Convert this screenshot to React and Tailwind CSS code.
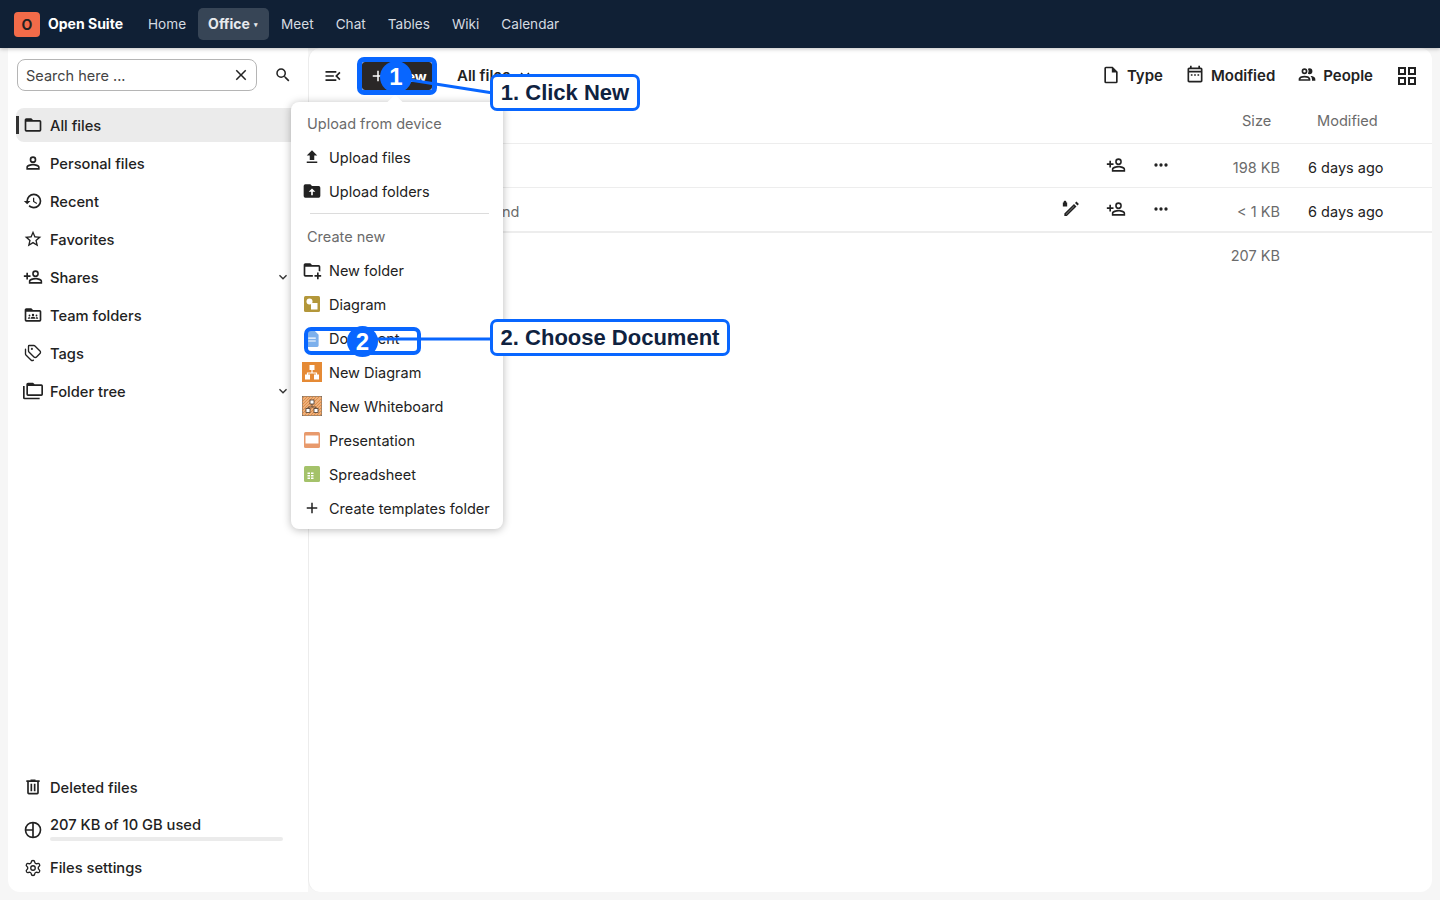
import React from 'react'
import { Settings, Tags } from 'lucide-react'

const P = {
  folder: 'M20,18H4V8H20M20,6H12L10,4H4C2.89,4 2,4.89 2,6V18A2,2 0 0,0 4,20H20A2,2 0 0,0 22,18V8C22,6.89 21.1,6 20,6Z',
  account: 'M12,4A4,4 0 0,1 16,8A4,4 0 0,1 12,12A4,4 0 0,1 8,8A4,4 0 0,1 12,4M12,6A2,2 0 0,0 10,8A2,2 0 0,0 12,10A2,2 0 0,0 14,8A2,2 0 0,0 12,6M12,13C14.67,13 20,14.33 20,17V20H4V17C4,14.33 9.33,13 12,13M12,14.9C9.03,14.9 5.9,16.36 5.9,17V18.1H18.1V17C18.1,16.36 14.97,14.9 12,14.9Z',
  history: 'M13.5,8H12V13L16.28,15.54L17,14.33L13.5,12.25V8M13,3A9,9 0 0,0 4,12H1L4.96,16.03L9,12H6A7,7 0 0,1 13,5A7,7 0 0,1 20,12A7,7 0 0,1 13,19C11.07,19 9.32,18.21 8.06,16.94L6.64,18.36C8.27,20 10.5,21 13,21A9,9 0 0,0 22,12A9,9 0 0,0 13,3',
  star: 'M12,15.39L8.24,17.66L9.23,13.38L5.91,10.5L10.29,10.13L12,6.09L13.71,10.13L18.09,10.5L14.77,13.38L15.76,17.66M22,9.24L14.81,8.63L12,2L9.19,8.63L2,9.24L7.45,13.97L5.82,21L12,17.27L18.18,21L16.54,13.97L22,9.24Z',
  share: 'M15,4A4,4 0 0,0 11,8A4,4 0 0,0 15,12A4,4 0 0,0 19,8A4,4 0 0,0 15,4M15,5.9C16.16,5.9 17.1,6.84 17.1,8C17.1,9.16 16.16,10.1 15,10.1A2.1,2.1 0 0,1 12.9,8A2.1,2.1 0 0,1 15,5.9M4,7V10H1V12H4V15H6V12H9V10H6V7H4M15,13C12.33,13 7,14.33 7,17V20H23V17C23,14.33 17.67,13 15,13M15,14.9C17.97,14.9 21.1,16.36 21.1,17V18.1H8.9V17C8.9,16.36 12,14.9 15,14.9Z',
  team: 'M20,18H4V8H20M20,6H12L10,4H4C2.89,4 2,4.89 2,6V18A2,2 0 0,0 4,20H20A2,2 0 0,0 22,18V8C22,6.89 21.1,6 20,6ZM12,10.5A1.4,1.4 0 1,1 12,13.3A1.4,1.4 0 1,1 12,10.5ZM7.8,11.5A1.1,1.1 0 1,1 7.8,13.7A1.1,1.1 0 1,1 7.8,11.5ZM16.2,11.5A1.1,1.1 0 1,1 16.2,13.7A1.1,1.1 0 1,1 16.2,11.5ZM9,16.5C9,15 10.5,14.2 12,14.2C13.5,14.2 15,15 15,16.5ZM5.8,16.5C5.8,15.3 6.8,14.5 8,14.5L8.4,16.5ZM18.2,16.5C18.2,15.3 17.2,14.5 16,14.5L15.6,16.5Z',
  tree: 'M22,4A2,2 0 0,1 24,6V16A2,2 0 0,1 22,18H6A2,2 0 0,1 4,16V4A2,2 0 0,1 6,2H12L14,4H22M2,6V20H20V22H2A2,2 0 0,1 0,20V6H2M6,6V16H22V6H6Z',
  trash: 'M9,3V4H4V6H5V19A2,2 0 0,0 7,21H17A2,2 0 0,0 19,19V6H20V4H15V3H9M7,6H17V19H7V6M9,8V17H11V8H9M13,8V17H15V8H13Z',
  pie: 'M12,2A10,10 0 1,0 22,12A10,10 0 0,0 12,2M11,4.06V11H4.06A8,8 0 0,1 11,4.06M4.06,13H11V19.94A8,8 0 0,1 4.06,13M13,19.94V4.06A8,8 0 0,1 13,19.94Z',
  search: 'M9.5,3A6.5,6.5 0 0,1 16,9.5C16,11.11 15.41,12.59 14.44,13.73L14.71,14H15.5L20.5,19L19,20.5L14,15.5V14.71L13.73,14.44C12.59,15.41 11.11,16 9.5,16A6.5,6.5 0 0,1 3,9.5A6.5,6.5 0 0,1 9.5,3M9.5,5C7,5 5,7 5,9.5C5,12 7,14 9.5,14C12,14 14,12 14,9.5C14,7 12,5 9.5,5Z',
  close: 'M19,6.41L17.59,5L12,10.59L6.41,5L5,6.41L10.59,12L5,17.59L6.41,19L12,13.41L17.59,19L19,17.59L13.41,12L19,6.41Z',
  menuOpen: 'M21,15.61L19.59,17L14.58,12L19.59,7L21,8.39L17.44,12L21,15.61M3,6H16V8H3V6M3,13V11H13V13H3M3,18V16H16V18H3Z',
  file: 'M14,2H6A2,2 0 0,0 4,4V20A2,2 0 0,0 6,22H18A2,2 0 0,0 20,20V8L14,2M18,20H6V4H13V9H18V20Z',
  calendar: 'M7 11H9V13H7V11M21 5V19C21 20.11 20.11 21 19 21H5C3.89 21 3 20.1 3 19V5C3 3.9 3.9 3 5 3H6V1H8V3H16V1H18V3H19C20.11 3 21 3.9 21 5M5 7H19V5H5V7M19 19V9H5V19H19M17 13V11H15V13H17M13 13V11H11V13H13Z',
  people: 'M13.07 10.41A5 5 0 0 0 13.07 4.59A3.39 3.39 0 0 1 15 4A3.5 3.5 0 0 1 15 11A3.39 3.39 0 0 1 13.07 10.41M5.5 7.5A3.5 3.5 0 1 1 9 11A3.5 3.5 0 0 1 5.5 7.5M7.5 7.5A1.5 1.5 0 1 0 9 6A1.5 1.5 0 0 0 7.5 7.5M16 17V19H2V17S2 13 9 13 16 17 16 17M14 17C13.86 16.22 12.67 15 9 15S4.07 16.3 4 17M15.95 13A5.32 5.32 0 0 1 18 17V19H22V17S22 13.37 15.94 13Z',
  grid: 'M3 11H11V3H3M5 5H9V9H5M13 21H21V13H13M15 15H19V19H15M3 21H11V13H3M5 15H9V19H5M13 3V11H21V3M19 9H15V5H19Z',
  dots: 'M16,12A2,2 0 0,1 18,10A2,2 0 0,1 20,12A2,2 0 0,1 18,14A2,2 0 0,1 16,12M10,12A2,2 0 0,1 12,10A2,2 0 0,1 14,12A2,2 0 0,1 12,14A2,2 0 0,1 10,12M4,12A2,2 0 0,1 6,10A2,2 0 0,1 8,12A2,2 0 0,1 6,14A2,2 0 0,1 4,12Z',
  upload: 'M9,16V10H5L12,3L19,10H15V16H9M5,20V18H19V20H5Z',
  folderUpload: 'M20,6A2,2 0 0,1 22,8V18A2,2 0 0,1 20,20H4A2,2 0 0,1 2,18V6A2,2 0 0,1 4,4H10L12,6H20M11,17H13V13H16L12,9L8,13H11V17Z',
  folderPlus: 'M13 19C13 19.34 13.04 19.67 13.09 20H4C2.9 20 2 19.11 2 18V6C2 4.89 2.89 4 4 4H10L12 6H20C21.1 6 22 6.89 22 8V13.81C21.39 13.46 20.72 13.22 20 13.09V8H4V18H13.09C13.04 18.33 13 18.66 13 19M20 18V15H18V18H15V20H18V23H20V20H23V18H20Z',
  plus: 'M19,13H13V19H11V13H5V11H11V5H13V11H19V13Z',
  chevron: 'M7.41,8.58L12,13.17L16.59,8.58L18,10L12,16L6,10L7.41,8.58Z',
  pencil: 'M21.5,6L18.5,3L16.8,4.7L19.8,7.7ZM18.6,8.9L15.6,5.9L4,17.5V20.5H7ZM6,18.5V18.3L15.6,8.7L15.8,8.9L6.2,18.5ZM3.2,3.6C3.2,2.6 3.9,2 4.8,2C5.7,2 6.4,2.6 6.4,3.6V4.2H7.4V9H2.2V4.2H3.2Z',
}

const Icon = ({ d, size = 20, className = '' }) => (
  <svg viewBox="0 0 24 24" width={size} height={size} fill="currentColor" fillRule="evenodd" className={className}>
    <path d={d} />
  </svg>
)

const DiagramIcon = () => (
  <svg viewBox="0 0 16 16" width="16" height="16">
    <rect width="16" height="16" rx="1.5" fill="#b3973a" />
    <circle cx="5.5" cy="5.5" r="3" fill="#fff" />
    <rect x="7" y="7" width="6.5" height="6.5" fill="#fff" />
  </svg>
)

const DocumentIcon = () => (
  <svg viewBox="0 0 14 18" width="14" height="17">
    <path d="M1.5 0H9L14 5V16.5A1.5 1.5 0 0 1 12.5 18H1.5A1.5 1.5 0 0 1 0 16.5V1.5A1.5 1.5 0 0 1 1.5 0Z" fill="#7cb0ec" />
    <path d="M3 8H11V9.3H3ZM3 11H11V12.3H3Z" fill="#fff" />
  </svg>
)

const NewDiagramIcon = () => (
  <svg viewBox="0 0 20 20" width="20" height="20">
    <rect width="20" height="20" fill="#e58a35" />
    <path d="M10 8V11M5.5 13V11H14.5V13" stroke="#fff" strokeWidth="1.2" fill="none" />
    <rect x="7.5" y="3" width="5" height="5" fill="#fff" />
    <rect x="3" y="12.5" width="5" height="5" fill="#fff" />
    <rect x="12" y="12.5" width="5" height="5" fill="#fff" />
  </svg>
)

const WhiteboardIcon = () => (
  <svg viewBox="0 0 20 20" width="20" height="20">
    <rect x="0.3" y="0.3" width="19.4" height="19.4" fill="#eeb07a" stroke="#6b5a4a" strokeWidth="0.6" />
    <path d="M0 3L3 0M0 6L6 0M0 9L9 0M0 12L12 0M0 15L15 0M0 18L18 0M2 20L20 2M5 20L20 5M8 20L20 8M11 20L20 11M14 20L20 14M17 20L20 17" stroke="#d67f3a" strokeWidth="0.7" />
    <path d="M10 8V11M6 12.5V11H14V12.5" stroke="#4b3b2f" strokeWidth="0.8" fill="none" />
    <rect x="8" y="4" width="4" height="4" fill="#fff" stroke="#4b3b2f" strokeWidth="0.8" />
    <rect x="4" y="12.5" width="4" height="4" fill="#fff" stroke="#4b3b2f" strokeWidth="0.8" />
    <rect x="12" y="12.5" width="4" height="4" fill="#fff" stroke="#4b3b2f" strokeWidth="0.8" />
  </svg>
)

const PresentationIcon = () => (
  <svg viewBox="0 0 16 16" width="16" height="16">
    <rect width="16" height="16" rx="1.5" fill="#e89a6c" />
    <rect x="1.5" y="3.5" width="13" height="8" fill="#fff" />
  </svg>
)

const SpreadsheetIcon = () => (
  <svg viewBox="0 0 16 16" width="16" height="16">
    <rect width="16" height="16" rx="1.5" fill="#a4c26a" />
    <path d="M3.5 6.5H6V8H3.5ZM7 6.5H9.5V8H7ZM3.5 9H6V10.5H3.5ZM7 9H9.5V10.5H7ZM3.5 11.5H6V13H3.5ZM7 11.5H9.5V13H7Z" fill="#fff" />
  </svg>
)

const navLinks = ['Home', 'Office', 'Meet', 'Chat', 'Tables', 'Wiki', 'Calendar']

const sideItems = [
  { label: 'All files', d: P.folder, active: true },
  { label: 'Personal files', d: P.account },
  { label: 'Recent', d: P.history },
  { label: 'Favorites', d: P.star },
  { label: 'Shares', d: P.share, chevron: true },
  { label: 'Team folders', d: P.team },
  { label: 'Tags', tags: true },
  { label: 'Folder tree', d: P.tree, chevron: true },
]

const SideRow = ({ item }) => (
  <div className={`relative flex items-center h-[34px] pl-[7px] pr-[17px] rounded-l-lg text-[14.7px] font-medium text-[#222] ${item.active ? 'bg-[#ebebeb]' : ''}`}>
    {item.active && <span className="absolute left-0 top-[8px] h-[18px] w-[3px] bg-[#333]" />}
    <span className="w-[20px] flex justify-center mr-[7px]">
      {item.tags ? <Tags size={18} strokeWidth={1.8} /> : <Icon d={item.d} size={20} />}
    </span>
    <span className="flex-1 pt-[2px]">{item.label}</span>
    {item.chevron && <Icon d={P.chevron} size={16} className="text-[#333]" />}
  </div>
)

const menuGroups = [
  { label: 'Upload files', icon: <Icon d={P.upload} size={18} className="text-[#222]" /> },
  { label: 'Upload folders', icon: <Icon d={P.folderUpload} size={20} className="text-[#222]" /> },
]

const createItems = [
  { label: 'New folder', icon: <Icon d={P.folderPlus} size={20} className="text-[#222]" /> },
  { label: 'Diagram', icon: <DiagramIcon /> },
  { label: 'Document', icon: <DocumentIcon /> },
  { label: 'New Diagram', icon: <NewDiagramIcon /> },
  { label: 'New Whiteboard', icon: <WhiteboardIcon /> },
  { label: 'Presentation', icon: <PresentationIcon /> },
  { label: 'Spreadsheet', icon: <SpreadsheetIcon /> },
  { label: 'Create templates folder', icon: <Icon d={P.plus} size={18} className="text-[#222]" /> },
]

const MenuItem = ({ item }) => (
  <div className="flex items-center h-[34px] text-[14.5px] text-[#222]">
    <span className="w-[20px] ml-[11px] mr-[7px] flex justify-center">{item.icon}</span>
    <span className="pt-[2px] whitespace-nowrap">{item.label}</span>
  </div>
)

const MenuTitle = ({ children }) => (
  <div className="flex items-center h-[34px] pl-[16px] pt-[2px] text-[14.5px] text-[#6b6b6b]">{children}</div>
)

const ToolFilter = ({ d, label }) => (
  <div className="flex items-center gap-[6px] text-[15px] font-semibold text-[#222]">
    <Icon d={d} size={20} className="-mt-[2px]" />
    <span>{label}</span>
  </div>
)

const FileRow = ({ name, size, edit }) => (
  <div className="flex items-center h-[44px] border-b border-[#ededed] text-[14.5px]">
    <div className="flex-1 pl-[193px] pt-[4px] text-[#6b6b6b]">{name}</div>
    <div className="w-[45px] flex justify-center -mt-[2px]">{edit && <Icon d={P.pencil} size={20} className="text-[#222]" />}</div>
    <div className="w-[45px] flex justify-center -mt-[2px]"><Icon d={P.share} size={20} className="text-[#222]" /></div>
    <div className="w-[45px] flex justify-center -mt-[2px]"><Icon d={P.dots} size={20} className="text-[#222]" /></div>
    <div className="w-[97px] pt-[4px] text-right text-[#6b6b6b]">{size}</div>
    <div className="w-[152px] pl-[28px] pt-[4px] text-[#222]">6 days ago</div>
  </div>
)

const App = () => {
  return (
    <div className="relative w-[1440px] h-[900px] overflow-hidden bg-[#f6f6f6] font-['Inter',sans-serif]">
      <header className="relative z-10 flex items-center h-12 pl-[14px] bg-[#102035] shadow-[0_1px_4px_rgba(0,0,0,0.25)]">
        <div className="flex items-center justify-center w-[26px] h-[25px] rounded-[4px] bg-[#f26b49] text-[14px] font-bold text-[#222]">O</div>
        <span className="ml-[8px] -mt-[1px] text-[14px] font-bold text-white">Open Suite</span>
        <nav className="flex items-center ml-[14px]">
          {navLinks.map((link) => (
            link === 'Office' ? (
              <div key={link} className="flex items-center w-[71px] h-[32px] mx-[1px] pl-[10px] rounded-[5px] bg-[#374556] text-[14px] font-bold text-[#e7eaee]">
                <span className="-mt-[1px]">Office</span> <span className="ml-[4px] mt-[2px] text-[7px]">▾</span>
              </div>
            ) : (
              <span key={link} className="px-[11px] text-[13.6px] text-[#d6dbe1]">{link}</span>
            )
          ))}
        </nav>
      </header>

      <div className="flex h-[844px] pl-[8px] pr-[8px]">
        <aside className="flex flex-col w-[300px] pl-[8px] pb-[7px] bg-white rounded-bl-xl">
          <div className="flex items-center h-[32px] mt-[11px]">
            <div className="flex items-center justify-between w-[240px] h-[32px] ml-[1px] pl-[8px] pr-[6px] border border-[#b5b5b5] rounded-lg text-[14.5px] text-[#444]">
              <span className="pt-[2px]">Search here ...</span>
              <Icon d={P.close} size={18} className="text-[#222]" />
            </div>
            <Icon d={P.search} size={18} className="ml-[17px] text-[#222]" />
          </div>
          <div className="flex flex-col gap-[4px] mt-[17px]">
            {sideItems.map((item) => <SideRow key={item.label} item={item} />)}
          </div>
          <div className="flex flex-col mt-auto">
            <SideRow item={{ label: 'Deleted files', d: P.trash }} />
            <div className="flex pl-[7px] mt-[6px] h-[34px]">
              <span className="w-[20px] mr-[7px] mt-[10px] flex justify-center"><Icon d={P.pie} size={20} className="text-[#222]" /></span>
              <div className="w-[233px]">
                <div className="text-[14.7px] font-medium text-[#222] leading-[18px] mt-[6px]">207 KB of 10 GB used</div>
                <div className="h-[4px] mt-[3px] rounded-full bg-[#ebebeb]" />
              </div>
            </div>
            <div className="flex items-center h-[34px] mt-[7px] pl-[7px] text-[14.7px] font-medium text-[#222]">
              <span className="w-[20px] mr-[7px] flex justify-center"><Settings size={18} strokeWidth={1.8} /></span>
              Files settings
            </div>
          </div>
        </aside>

        <main className="flex-1 bg-white rounded-xl border-l border-[#ececec]">
          <div className="flex items-center h-[56px] pl-[14px] pr-[13px]">
            <Icon d={P.menuOpen} size={20} className="text-[#222]" />
            <div className="flex items-center w-[70px] h-[28px] ml-[19px] pl-[7px] rounded-[3px] bg-[#2a2727] text-[14px] font-bold text-white">
              <Icon d={P.plus} size={18} />
              <span className="ml-[9px]">New</span>
            </div>
            <div className="flex items-center ml-[25px] text-[15px] font-semibold text-[#222]">
              All files
              <Icon d={P.chevron} size={18} className="ml-[6px] -mt-[3px]" />
            </div>
            <div className="flex items-center gap-[22px] ml-auto">
              <ToolFilter d={P.file} label="Type" />
              <ToolFilter d={P.calendar} label="Modified" />
              <ToolFilter d={P.people} label="People" />
              <Icon d={P.grid} size={24} className="text-[#222]" />
            </div>
          </div>
          <div className="flex items-center h-[40px] pb-[3px] border-b border-[#ededed] text-[14.6px] text-[#6b6b6b]">
            <div className="flex-1" />
            <div className="w-[75px]">Size</div>
            <div className="w-[115px]">Modified</div>
          </div>
          <FileRow name="" size="198 KB" />
          <div className="border-b border-[#ededed]">
            <FileRow name="nd" size="< 1 KB" edit />
          </div>
          <div className="flex items-center h-[45px] text-[14.5px] text-[#6b6b6b]">
            <div className="flex-1" />
            <div className="w-[97px] pt-[1px] text-right mr-[152px]">207 KB</div>
          </div>
        </main>
      </div>

      {/* dropdown opened from the New button */}
      <div className="absolute left-[291px] top-[102px] z-20 w-[212px] pt-[4px] pb-[4px] bg-white rounded-lg shadow-[0_1px_8px_rgba(0,0,0,0.28)]">
        <span className="absolute left-[98px] -top-[5px] w-[12px] h-[12px] rotate-45 bg-white" />
        <div className="relative">
          <MenuTitle>Upload from device</MenuTitle>
          {menuGroups.map((item) => <MenuItem key={item.label} item={item} />)}
          <div className="h-[11px] pt-[5px]"><div className="h-px ml-[19px] mr-[14px] bg-[#dcdcdc]" /></div>
          <MenuTitle>Create new</MenuTitle>
          {createItems.map((item) => <MenuItem key={item.label} item={item} />)}
        </div>
      </div>

      {/* tutorial annotations drawn over the app */}
      <svg className="absolute inset-0 z-30 pointer-events-none" width="1440" height="900">
        <path d="M410 80L493 93" stroke="#0866ff" strokeWidth="3" />
        <path d="M375 339H493" stroke="#0866ff" strokeWidth="3" />
      </svg>
      <div className="absolute left-[357px] top-[57px] z-30 w-[80px] h-[38px] rounded-[7px] border-[5px] border-[#0866ff]" />
      <div className="absolute left-[304px] top-[327px] z-30 w-[117px] h-[28px] rounded-[7px] border-[4px] border-[#0866ff]" />
      <div className="absolute left-[380px] top-[61px] z-30 flex items-center justify-center w-[32px] h-[32px] rounded-full bg-[#0866ff] text-[24px] font-bold text-white font-['Liberation_Sans',sans-serif]">1</div>
      <div className="absolute left-[347px] top-[326px] z-30 flex items-center justify-center w-[31px] h-[31px] rounded-full bg-[#0866ff] text-[24px] font-bold text-white font-['Liberation_Sans',sans-serif]">2</div>
      <div className="absolute left-[490px] top-[74px] z-30 flex items-center justify-center w-[150px] h-[37px] rounded-[7px] border-[3px] border-[#0866ff] bg-white text-[22px] font-bold whitespace-nowrap text-[#0f2240] font-['Liberation_Sans',sans-serif]">1. Click New</div>
      <div className="absolute left-[490px] top-[319px] z-30 flex items-center justify-center w-[240px] h-[37px] rounded-[7px] border-[3px] border-[#0866ff] bg-white text-[22px] font-bold whitespace-nowrap text-[#0f2240] font-['Liberation_Sans',sans-serif]">2. Choose Document</div>
    </div>
  )
}

export default App
